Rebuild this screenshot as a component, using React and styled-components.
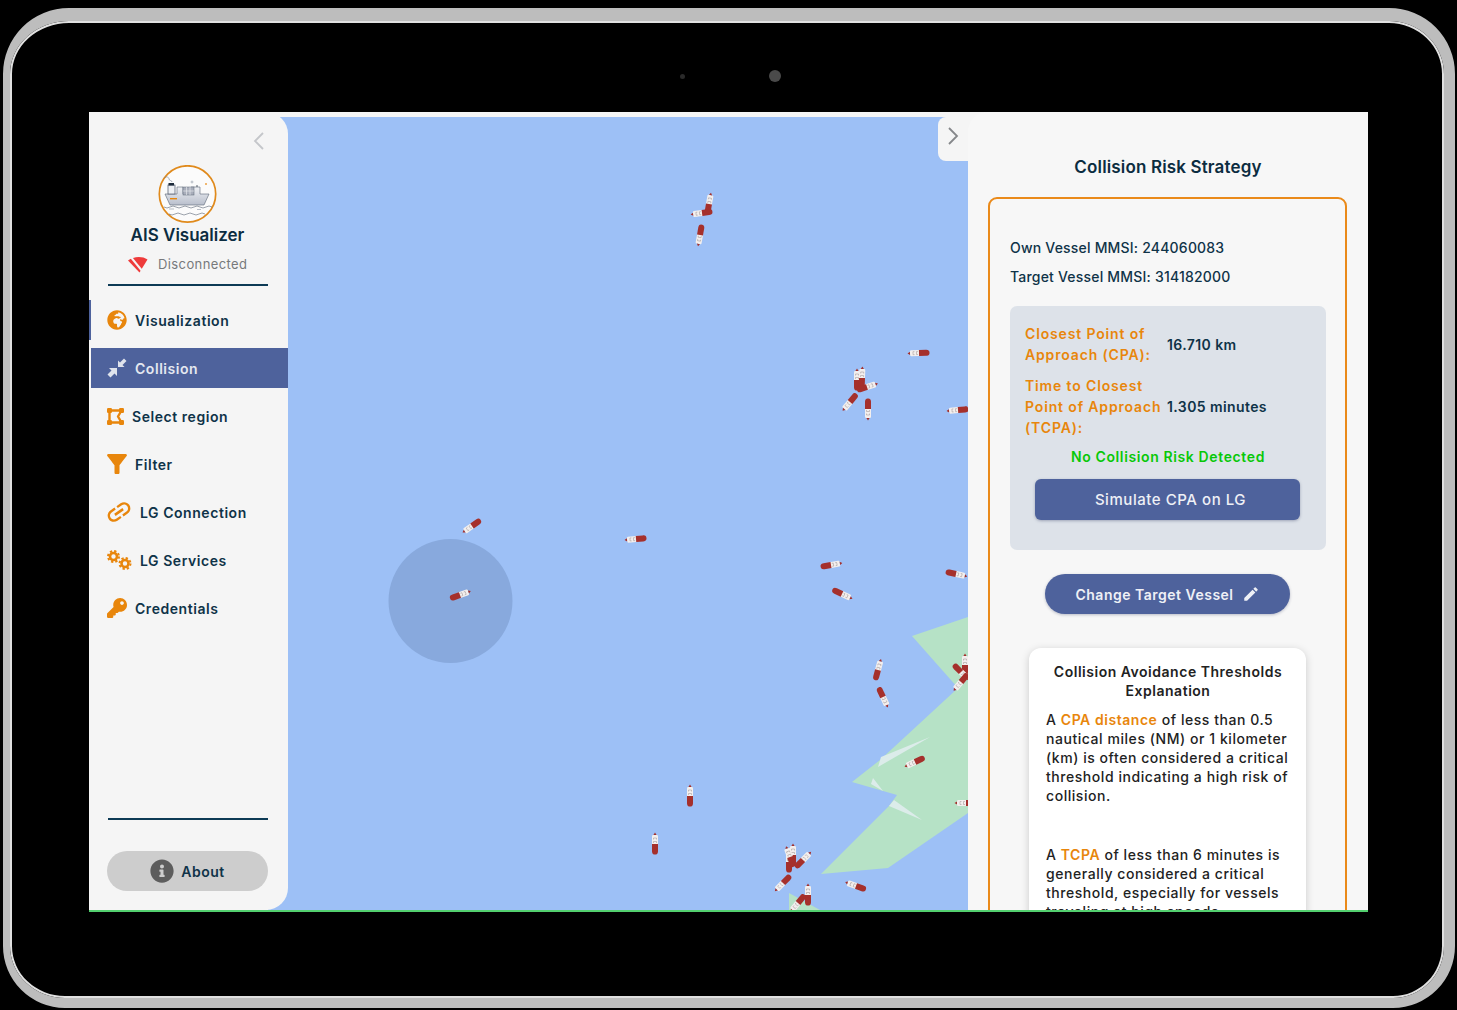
import styled, { createGlobalStyle } from "styled-components";
import { FaGlobeAfrica, FaKey, FaInfoCircle } from "react-icons/fa";
import { MdFilterAlt, MdLink, MdEdit } from "react-icons/md";

const Global = createGlobalStyle`
  html, body {
    margin: 0;
    background: #000;
  }
  body {
    font-family: Inter, "Open Sans", "Liberation Sans", sans-serif;
    color: #0b2c40;
  }
  * {
    box-sizing: border-box;
  }
`;

const Page = styled.div`
  width: 1457px;
  height: 1010px;
  padding: 8px 2px 2px 3px;
  overflow: hidden;
`;
const Device = styled.div`
  width: 1452px;
  height: 1000px;
  padding-left: 3px;
  border-style: solid;
  border-width: 13px 11px 10px 7px;
  border-color: #bdbdbd;
  border-radius: 66px 66px 62px 62px;
  background: #000;
  box-shadow: inset 0 0 0 2px #e0e0e0;
  display: flex;
  flex-direction: column;
  align-items: center;
`;
const CameraBar = styled.div`
  height: 91px;
  padding: 19px 0 0 3px;
  display: flex;
  align-items: center;
  gap: 84px;
`;
const Lens = styled.div`
  width: ${(p) => p.$size}px;
  height: ${(p) => p.$size}px;
  border-radius: 50%;
  background: ${(p) => p.$color};
`;
const Screen = styled.div`
  position: relative;
  width: 1279px;
  height: 800px;
  flex: none;
  display: flex;
  background: #f5f5f5;
  border-bottom: 2px solid #52cf6e;
  overflow: hidden;
`;

/* left nav */
const Sidebar = styled.aside`
  position: relative;
  z-index: 2;
  width: 199px;
  flex: none;
  display: flex;
  flex-direction: column;
  background: #f5f5f5;
  border-radius: 0 22px 22px 0;
`;
const CollapseRow = styled.div`
  height: 53px;
  padding: 20px 24px 0 0;
  display: flex;
  justify-content: flex-end;
  align-items: flex-start;
  color: #c4c6ca;
`;
const Logo = styled.svg`
  display: block;
  margin-left: 69px;
  width: 60px;
  height: 60px;
`;
const AppName = styled.h1`
  margin: -1px 0 0;
  padding-right: 2px;
  text-align: center;
  font-size: 17px;
  line-height: 22px;
  font-weight: 600;
  color: #0b2c40;
`;
const ConnectionRow = styled.div`
  margin: 7px 0 0 39px;
  height: 22px;
  display: flex;
  align-items: center;
  gap: 10px;
  font-size: 13px;
  letter-spacing: 0.4px;
  color: #77797c;
`;
const Rule = styled.div`
  margin: ${(p) => p.$margin};
  height: 2px;
  background: #0d3a55;
`;
const NavList = styled.nav`
  margin-top: 14px;
  display: flex;
  flex-direction: column;
  gap: 8px;
  flex: 1;
`;
const NavRow = styled.div`
  height: 40px;
  padding-left: 16px;
  margin-left: 2px;
  display: flex;
  align-items: center;
  gap: ${(p) => p.$gap || 8}px;
  font-size: 14px;
  font-weight: 600;
  letter-spacing: 0.55px;
  color: ${(p) => (p.$active ? "#e4e8f0" : "#0f3348")};
  background: ${(p) => (p.$active ? "#4e629c" : "transparent")};
  box-shadow: ${(p) => (p.$current ? "-2px 0 0 #4e629c" : "none")};
  & > svg {
    flex: none;
    color: ${(p) => (p.$active ? "#dfe3ec" : "#e8860c")};
  }
`;
const FilterGlyph = styled(MdFilterAlt)`
  margin: 0 -5px;
`;
const LinkGlyph = styled(MdLink)`
  margin: 0 -3px;
  transform: rotate(-35deg);
`;
const AboutPill = styled.button`
  margin: 31px 20px 19px 18px;
  height: 40px;
  padding: 0;
  border: none;
  border-radius: 20px;
  background: #cdcdcd;
  display: flex;
  align-items: center;
  justify-content: center;
  gap: 7px;
  font: 600 14px Inter, sans-serif;
  letter-spacing: 0.55px;
  color: #0f3348;
  & > svg {
    color: #5d5d5d;
  }
`;

/* map */
const MapArea = styled.main`
  position: relative;
  flex: 1;
  margin: 5px 0 0 -20px;
  background: #9dc0f6;
`;
const MapSvg = styled.svg`
  display: block;
  width: 100%;
  height: 100%;
`;
const PanelToggle = styled.button`
  position: absolute;
  top: 0;
  right: 0;
  width: 30px;
  height: 44px;
  padding: 10px 0 0;
  border: none;
  border-radius: 8px 0 0 8px;
  background: #f5f5f5;
  color: #85878a;
  display: flex;
  align-items: flex-start;
  justify-content: center;
`;

/* right panel */
const Panel = styled.section`
  width: 400px;
  flex: none;
  padding: 0 20px;
  background: #f7f7f7;
  border-top-left-radius: 20px;
  overflow: hidden;
`;
const PanelTitle = styled.h2`
  margin: 44px 0 19px;
  height: 22px;
  text-align: center;
  font-size: 17px;
  line-height: 22px;
  font-weight: 600;
  letter-spacing: 0.15px;
  color: #0b2c40;
`;
const StrategyCard = styled.div`
  width: 359px;
  height: 760px;
  padding: 39px 20px 0 20px;
  border: 2px solid #ea8a1a;
  border-radius: 9px;
`;
const VesselLine = styled.p`
  margin: 0 0 10px;
  font-size: 14px;
  line-height: 19px;
  font-weight: 500;
  letter-spacing: 0.2px;
  color: #0f3348;
`;
const MetricsBox = styled.div`
  margin-top: 20px;
  width: 316px;
  height: 244px;
  padding: 17px 15px 0;
  background: #dde2e9;
  border-radius: 7px;
`;
const MetricRow = styled.div`
  display: grid;
  grid-template-columns: 142px 1fr;
  align-items: center;
  margin-bottom: 10px;
`;
const MetricLabel = styled.div`
  font-size: 14px;
  line-height: 21px;
  font-weight: 600;
  letter-spacing: 0.85px;
  color: #e8860c;
  white-space: nowrap;
`;
const MetricValue = styled.div`
  font-size: 14px;
  line-height: 21px;
  font-weight: 600;
  letter-spacing: 0.4px;
  color: #0f3348;
`;
const RiskStatus = styled.div`
  margin-top: -1px;
  text-align: center;
  font-size: 14px;
  line-height: 19px;
  font-weight: 600;
  letter-spacing: 0.62px;
  color: #08c808;
`;
const SimulateButton = styled.button`
  display: block;
  margin: 13px 0 0 10px;
  width: 265px;
  height: 41px;
  padding: 0 0 0 6px;
  border: none;
  border-radius: 6px;
  background: #4e629c;
  box-shadow: 0 1px 3px rgba(40, 50, 90, 0.35);
  font: 500 15px Inter, sans-serif;
  letter-spacing: 0.55px;
  color: #eef0f6;
`;
const ChangeButton = styled.button`
  margin: 24px 0 0 35px;
  width: 245px;
  height: 40px;
  padding: 0;
  border: none;
  border-radius: 20px;
  background: #4e629c;
  box-shadow: 0 1px 3px rgba(40, 50, 90, 0.3);
  display: flex;
  align-items: center;
  justify-content: center;
  gap: 8px;
  font: 600 14px Inter, sans-serif;
  letter-spacing: 0.5px;
  color: #eef0f6;
`;
const ExplainCard = styled.article`
  margin: 34px 0 0 19px;
  width: 277px;
  height: 420px;
  padding: 14px 16px 0 17px;
  background: #fff;
  border-radius: 12px;
  box-shadow: 0 2px 8px rgba(0, 0, 0, 0.18);
  font-size: 14px;
  line-height: 19px;
  color: #222;
  white-space: nowrap;
`;
const ExplainTitle = styled.h3`
  margin: 0 0 10px;
  text-align: center;
  font-size: 14px;
  line-height: 19px;
  font-weight: 600;
  letter-spacing: 0.52px;
  color: #222;
`;
const ExplainText = styled.p`
  margin: 0 0 40px;
  font-weight: 500;
  letter-spacing: 0.55px;
`;
const Accent = styled.span`
  color: #e8860c;
  font-weight: 600;
`;

function RegionIcon() {
  return (
    <svg width="17" height="17" viewBox="0 0 17 17" fill="currentColor">
      <path d="M2.5 2.5H14.5L11 8.5L14.5 14.5H2.500Z" fill="none" stroke="currentColor" strokeWidth="2.400" strokeLinejoin="round" />
      <rect x="0" y="0" width="5" height="5" rx="1.200" />
      <rect x="12" y="0" width="5" height="5" rx="1.200" />
      <rect x="0" y="12" width="5" height="5" rx="1.200" />
      <rect x="12" y="12" width="5" height="5" rx="1.200" />
    </svg>
  );
}

function CollisionIcon() {
  return (
    <svg width="20" height="20" viewBox="0 0 20 20" fill="currentColor">
      <path d="M10 10V18L7.500 15.500L3.500 19.500L.5 16.500L4.500 12.500L2 10Z" />
      <path d="M11 9V2.500L13 4.500L17 .5L19.500 3L15.500 7L17.500 9Z" />
    </svg>
  );
}

function Gear({ x, y }) {
  return (
    <g transform={`translate(${x} ${y})`} fill="none" stroke="currentColor">
      <circle r="3.500" strokeWidth="2.600" />
      <circle r="5.500" strokeWidth="2" strokeDasharray="2.300 2.020" />
    </g>
  );
}

function GearsIcon() {
  return (
    <svg width="25" height="20" viewBox="0 0 25 20">
      <Gear x={6.5} y={6.5} />
      <Gear x={18} y={13.500} />
    </svg>
  );
}

function Chevron({ left }) {
  return (
    <svg width="11" height="18" viewBox="0 0 11 18" fill="none" stroke="currentColor" strokeWidth="1.800">
      <path d={left ? "M10 1L2 9L10 17" : "M1 1L9 9L1 17"} />
    </svg>
  );
}

function WifiOff() {
  return (
    <svg width="20" height="17" viewBox="0 0 20 17">
      <path d="M0 4.500C5 .5 14 -.5 19.500 3.500L11.500 16.500Z" fill="#ee3b3b" />
      <path d="M2 0L15 16" stroke="#f5f5f5" strokeWidth="2" />
    </svg>
  );
}

const navItems = [
  { label: "Visualization", icon: <FaGlobeAfrica size={20} />, current: true },
  { label: "Collision", icon: <CollisionIcon />, active: true },
  { label: "Select region", icon: <RegionIcon /> },
  { label: "Filter", icon: <FilterGlyph size={30} /> },
  { label: "LG Connection", icon: <LinkGlyph size={30} />, gap: 9 },
  { label: "LG Services", icon: <GearsIcon /> },
  { label: "Credentials", icon: <FaKey size={20} /> },
];

// [x, y, heading in degrees], heading points at the white superstructure end
const ships = [
  [709, 204, -80], [702, 213, 172], [700, 235, 100],
  [919, 353, 178], [857, 380, -90], [862, 378, -88], [867, 387, -18],
  [850, 402, 130], [868, 409, 90], [958, 410, 175],
  [472, 526, 145], [460, 595, -20], [636, 539, 175],
  [831, 565, -10], [842, 594, 25], [956, 574, 12],
  [878, 670, -75], [883, 697, 65], [965, 665, -90], [961, 672, 45], [961, 682, 130],
  [915, 762, 155], [966, 803, 180], [690, 796, -90], [655, 844, -90],
  [793, 855, -90], [789, 862, -90], [790, 857, -110], [803, 860, -45],
  [783, 883, 135], [808, 895, -90], [798, 903, 130], [856, 886, 200],
];

function ShipLogo() {
  return (
    <Logo viewBox="0 0 60 60">
      <defs>
        <linearGradient id="hull" x1="0" y1="0" x2="0" y2="1">
          <stop offset="0" stopColor="#eef0f4" />
          <stop offset="1" stopColor="#b9bfcc" />
        </linearGradient>
      </defs>
      <circle cx="29.500" cy="29" r="28.200" fill="#fbfbfb" stroke="#e08a1c" strokeWidth="1.700" />
      <path d="M7 29H19V22H25V29H33V22H42V29H51L46 40H12Z" fill="url(#hull)" stroke="#5a6475" strokeWidth=".6" />
      <rect x="10" y="20" width="7" height="9" fill="#eef0f4" stroke="#4a5568" strokeWidth=".7" />
      <rect x="10.500" y="18" width="5.500" height="2.500" fill="#1d2a3a" />
      <rect x="25" y="22" width="11" height="8" fill="#a9aebb" stroke="#5a6475" strokeWidth=".5" />
      <path d="M25 26H36M28.500 22V30M32 22V30" stroke="#eef0f4" strokeWidth=".6" />
      <rect x="12" y="33" width="7" height="1.400" fill="#e8860c" />
      <path d="M6 13c2-2 5-1 5 1s3 1 3 3" fill="none" stroke="#7b8494" strokeWidth=".6" />
      <circle cx="34" cy="17" r="1" fill="none" stroke="#7b8494" strokeWidth=".5" />
      <circle cx="39" cy="21" r=".7" fill="#1d2a3a" />
      <path d="M47 19h2M48 18v2" stroke="#e8860c" strokeWidth=".7" />
      <path d="M6 42q3 2 6 0t6 0t6 0t6 0t6 0t6 0t6 0t6 0" fill="none" stroke="#5a6475" strokeWidth=".6" />
      <path d="M11 49q3 2 6 0t6 0t6 0t6 0t6 0t6 0" fill="none" stroke="#5a6475" strokeWidth=".6" />
      <path d="M11 44h5M39 44.500h4" stroke="#8b93a3" strokeWidth=".6" />
    </Logo>
  );
}

function Ship({ x, y, heading }) {
  return (
    <g transform={`translate(${x} ${y}) rotate(${heading})`}>
      <rect x="-1" y="-3" width="10" height="6" rx="1.200" fill="#f3efee" />
      <path d="M9 -1.600L11.500 0L9 1.600Z" fill="#a5302c" />
      <path d="M1 -1.500h1.500v3h-1.500M4.500 -1.500h1.500v3h-1.500" fill="none" stroke="#9a8f8f" strokeWidth=".5" />
      <path d="M0 -3H-7C-10 -3 -10.500 -1.500 -10.500 0S-10 3 -7 3H0Z" fill="#a5302c" />
    </g>
  );
}

function MapCanvas() {
  return (
    <MapSvg viewBox="268 117 700 793" preserveAspectRatio="none">
      <circle cx="450.500" cy="601" r="62" fill="#88a9dd" />
      <g fill="#b6e2c6">
        <path d="M912 636L968 617V680L958 688Z" />
        <path d="M958 688L968 680V813L888 868L821 874L889 806L897 795L852 782L880 760Z" />
        <path d="M789 893L820 910H789Z" />
      </g>
      <g fill="#dcecea">
        <path d="M878 767L881 757L930 737Z" />
        <path d="M889 806L894 800L922 820Z" />
        <path d="M871 784L873 778L883 791Z" />
      </g>
      {ships.map(([x, y, heading], idx) => (
        <Ship key={idx} x={x} y={y} heading={heading} />
      ))}
    </MapSvg>
  );
}

export default function App() {
  return (
    <>
      <Global />
      <Page>
        <Device>
          <CameraBar>
            <Lens $size={5} $color="#2a2a2a" />
            <Lens $size={12} $color="#4a4a4a" />
          </CameraBar>
          <Screen>
            <Sidebar>
              <CollapseRow>
                <Chevron left />
              </CollapseRow>
              <ShipLogo />
              <AppName>AIS Visualizer</AppName>
              <ConnectionRow>
                <WifiOff />
                Disconnected
              </ConnectionRow>
              <Rule $margin="9px 20px 0 19px" />
              <NavList>
                {navItems.map((item) => (
                  <NavRow key={item.label} $active={item.active} $current={item.current} $gap={item.gap}>
                    {item.icon}
                    {item.label}
                  </NavRow>
                ))}
              </NavList>
              <Rule $margin="0 20px 0 19px" />
              <AboutPill>
                <FaInfoCircle size={24} />
                About
              </AboutPill>
            </Sidebar>
            <MapArea>
              <MapCanvas />
              <PanelToggle>
                <Chevron />
              </PanelToggle>
            </MapArea>
            <Panel>
              <PanelTitle>Collision Risk Strategy</PanelTitle>
              <StrategyCard>
                <VesselLine>Own Vessel MMSI: 244060083</VesselLine>
                <VesselLine>Target Vessel MMSI: 314182000</VesselLine>
                <MetricsBox>
                  <MetricRow>
                    <MetricLabel>
                      Closest Point of
                      <br />
                      Approach (CPA):
                    </MetricLabel>
                    <MetricValue>16.710 km</MetricValue>
                  </MetricRow>
                  <MetricRow>
                    <MetricLabel>
                      Time to Closest
                      <br />
                      Point of Approach
                      <br />
                      (TCPA):
                    </MetricLabel>
                    <MetricValue>1.305 minutes</MetricValue>
                  </MetricRow>
                  <RiskStatus>No Collision Risk Detected</RiskStatus>
                  <SimulateButton>Simulate CPA on LG</SimulateButton>
                </MetricsBox>
                <ChangeButton>
                  Change Target Vessel
                  <MdEdit size={18} />
                </ChangeButton>
                <ExplainCard>
                  <ExplainTitle>
                    Collision Avoidance Thresholds
                    <br />
                    Explanation
                  </ExplainTitle>
                  <ExplainText>
                    A <Accent>CPA distance</Accent> of less than 0.5
                    <br />
                    nautical miles (NM) or 1 kilometer
                    <br />
                    (km) is often considered a critical
                    <br />
                    threshold indicating a high risk of
                    <br />
                    collision.
                  </ExplainText>
                  <ExplainText>
                    A <Accent>TCPA</Accent> of less than 6 minutes is
                    <br />
                    generally considered a critical
                    <br />
                    threshold, especially for vessels
                    <br />
                    traveling at high speeds.
                  </ExplainText>
                </ExplainCard>
              </StrategyCard>
            </Panel>
          </Screen>
        </Device>
      </Page>
    </>
  );
}
